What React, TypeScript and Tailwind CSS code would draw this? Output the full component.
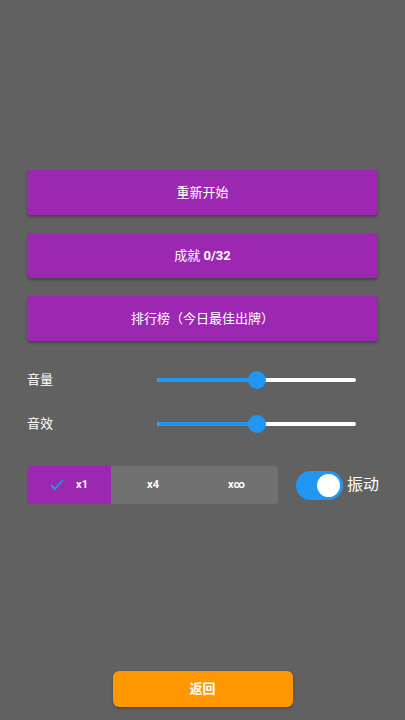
import React from "react";

function Slider({ value }: { value: number }) {
  return (
    <div className="relative h-[20px] w-[199px]">
      <div className="absolute left-0 right-0 top-[8px] h-[4px] rounded-full bg-white" />
      <div
        className="absolute left-0 top-[8px] h-[4px] rounded-full bg-[#2196f3]"
        style={{ width: `${value}%` }}
      />
      <div
        className="absolute top-[1px] h-[18px] w-[18px] -translate-x-1/2 rounded-full bg-[#2196f3]"
        style={{ left: `${value}%` }}
      />
    </div>
  );
}

export default function App() {
  const font = { fontFamily: "Roboto, 'Noto Sans CJK SC', sans-serif" };
  return (
    <div className="min-h-[720px] w-[405px] bg-[#616161] text-white relative" style={font}>
      <div className="flex flex-col px-[27px] pt-[170px]">
        <div className="flex flex-col gap-[18px]">
          {["重新开始", "成就 0/32", "排行榜（今日最佳出牌）"].map((t, i) => (
            <button
              key={i}
              className="flex h-[45px] w-full items-center justify-center rounded-[4px] bg-[#9c27b0] text-[13px] font-normal text-white shadow-[0_2px_3px_rgba(0,0,0,0.3)]"
            >
              {i === 1 ? (
                <span>
                  成就 <span className="font-bold">0/32</span>
                </span>
              ) : (
                t
              )}
            </button>
          ))}
        </div>

        <div className="mt-[29px] flex items-center h-[20px]">
          <span className="w-[130px] text-[13px]">音量</span>
          <Slider value={50} />
        </div>
        <div className="mt-[24px] flex items-center h-[20px]">
          <span className="w-[130px] text-[13px]">音效</span>
          <Slider value={50} />
        </div>

        <div className="mt-[32px] flex items-center">
          <div className="flex h-[38px] w-[251px] shrink-0 overflow-hidden rounded-[4px] bg-[#717171]">
            <div className="flex w-[84px] items-center justify-center gap-[12px] bg-[#9c27b0]">
              <svg width="14" height="12" viewBox="0 0 14 12" fill="none">
                <path d="M1.5 6.5 L5 10 L12.5 1.5" stroke="#2196f3" strokeWidth="1.8" strokeLinecap="round" strokeLinejoin="round" />
              </svg>
              <span className="text-[11px] font-bold">x1</span>
            </div>
            <div className="flex w-[84px] items-center justify-center text-[11px] font-bold">x4</div>
            <div className="flex w-[83px] items-center justify-center text-[11px] font-bold">x∞</div>
          </div>
          <div className="ml-[18px] flex shrink-0 items-center">
            <div className="relative h-[29px] w-[47px] shrink-0 rounded-full bg-[#2196f3]">
              <div className="absolute right-[3px] top-[3px] h-[23px] w-[23px] rounded-full bg-white" />
            </div>
            <span className="ml-[4px] whitespace-nowrap text-[16px]">振动</span>
          </div>
        </div>
      </div>

      <div className="absolute left-0 right-0 top-[671px] flex justify-center">
        <button className="flex h-[36px] w-[180px] items-center justify-center rounded-[6px] bg-[#ff9800] text-[13px] font-bold text-white shadow-[0_1px_3px_rgba(0,0,0,0.3)]">
          返回
        </button>
      </div>
    </div>
  );
}
